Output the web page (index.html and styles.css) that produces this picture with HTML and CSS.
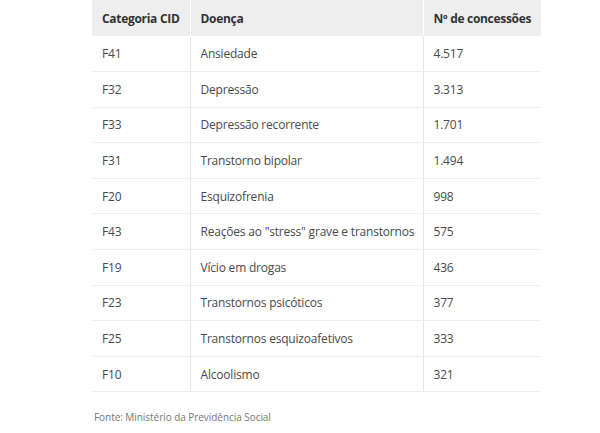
FILE: index.html
```html
<!DOCTYPE html>
<html lang="pt">
<head>
<meta charset="utf-8">
<link rel="stylesheet" href="styles.css">
</head>
<body>
<div class="wrap">
  <table class="data">
    <colgroup>
      <col class="c1"><col class="c2"><col class="c3">
    </colgroup>
    <thead>
      <tr><th>Categoria CID</th><th>Doença</th><th>Nº de concessões</th></tr>
    </thead>
    <tbody>
      <tr><td>F41</td><td>Ansiedade</td><td>4.517</td></tr>
      <tr><td>F32</td><td>Depressão</td><td>3.313</td></tr>
      <tr><td>F33</td><td>Depressão recorrente</td><td>1.701</td></tr>
      <tr><td>F31</td><td>Transtorno bipolar</td><td>1.494</td></tr>
      <tr><td>F20</td><td>Esquizofrenia</td><td>998</td></tr>
      <tr><td>F43</td><td>Reações ao "stress" grave e transtornos</td><td>575</td></tr>
      <tr><td>F19</td><td>Vício em drogas</td><td>436</td></tr>
      <tr><td>F23</td><td>Transtornos psicóticos</td><td>377</td></tr>
      <tr><td>F25</td><td>Transtornos esquizoafetivos</td><td>333</td></tr>
      <tr><td>F10</td><td>Alcoolismo</td><td>321</td></tr>
    </tbody>
  </table>
  <p class="source">Fonte: Ministério da Previdência Social</p>
</div>
</body>
</html>
```
FILE: styles.css
```css
html, body {
  margin: 0;
  padding: 0;
  background: #fff;
}
body {
  font-family: "Open Sans", "Liberation Sans", sans-serif;
  color: #4a4a4a;
}
.wrap {
  margin-left: 92px;
  width: 449px;
}
.data {
  border-collapse: collapse;
  width: 449px;
  table-layout: fixed;
  font-size: 12px;
  letter-spacing: -0.2px;
}
.c1 { width: 98px; }
.c2 { width: 233px; }
.c3 { width: 118px; }
.data th {
  background: #eeeeee;
  color: #333;
  font-weight: 700;
  text-align: left;
  height: 36px;
  padding: 0 10px;
  border-left: 1px solid #fff;
  box-sizing: border-box;
  white-space: nowrap;
  letter-spacing: -0.3px;
}
.data th:first-child { border-left: none; }
.data td {
  height: 35.6px;
  padding: 0 10px;
  border-bottom: 1px solid #efefef;
  border-left: 1px solid #e6e6e6;
  box-sizing: border-box;
  white-space: nowrap;
}
.data td:first-child { border-left: none; }
.source {
  margin: 18px 0 0 2px;
  font-size: 10px;
  letter-spacing: -0.05px;
  color: #777;
}
```
